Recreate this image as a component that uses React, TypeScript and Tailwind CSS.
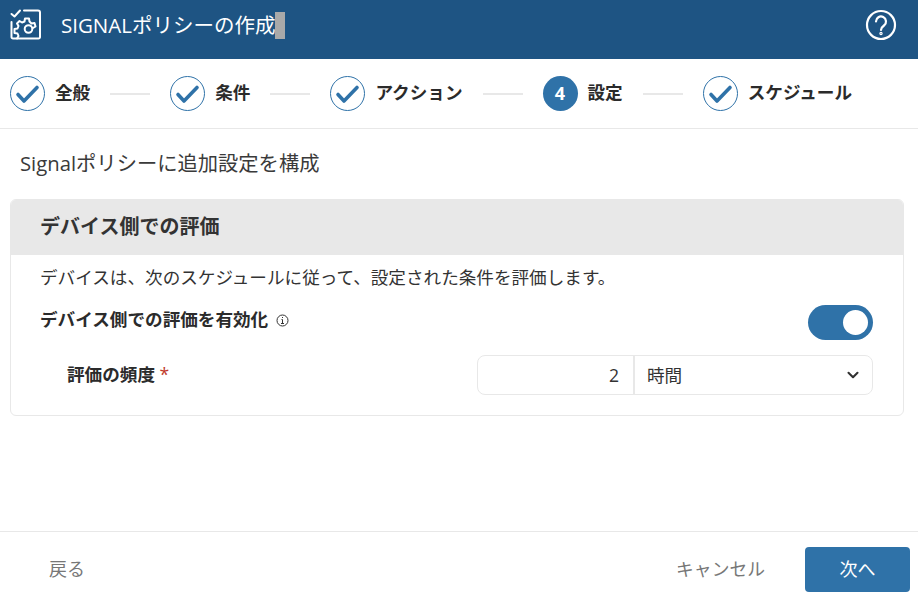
import { ChevronDown } from 'lucide-react';

const font = "font-['Open_Sans','Noto_Sans_CJK_JP',sans-serif]";

function Step({ label, number, last }: { label: string; number?: number; last?: boolean }) {
  return (
    <div className="flex items-center">
      {number ? (
        <div className="flex size-[35px] items-center justify-center rounded-full bg-[#2f72a8] text-[18px] font-bold text-white">
          {number}
        </div>
      ) : (
        <svg width="35" height="35" viewBox="0 0 35 35" fill="none" stroke="#2f72a8">
          <circle cx="17.500" cy="17.500" r="17" />
          <path d="M8 18.500l6 6.500L27 11.500" strokeWidth="3.600" strokeLinecap="round" strokeLinejoin="round" />
        </svg>
      )}
      <span className="ml-[10px] pb-[2px] text-[17.6px] leading-none font-bold text-[#2b2b2b]">{label}</span>
      {!last && <div className="mx-[20px] h-[2px] w-[40px] bg-[#e8e8e8]" />}
    </div>
  );
}

function PolicyIcon() {
  return (
    <svg width="32" height="32" viewBox="0 0 32 32" fill="none" stroke="white" strokeWidth="2" strokeLinecap="round" strokeLinejoin="round">
      <path d="M1.500 5l3 2.500L10 1.500" />
      <path d="M14 1.500h14a2 2 0 0 1 2 2V28a1.500 1.500 0 0 1-1.500 1.500H3A1.500 1.500 0 0 1 1.500 28V13" />
      <path d="M23 19l2.500-1.500-1-3.500-3 .5-2-2-.5-3h-4l-.5 3-2.500 1-2.500-1.500-2.500 2.500 1.500 2.500-1 2.500-3 .5v4l3 .5 1 2.500-1.500 2.500" />
      <circle cx="18.500" cy="20" r="3.800" />
    </svg>
  );
}

export default function App() {
  return (
    <div className={`flex h-[597px] w-[918px] flex-col bg-white ${font}`}>
      <header className="flex h-[59px] shrink-0 items-center bg-[#1e5483] pr-[21px] pb-[9px] pl-[10px] text-white">
        <PolicyIcon />
        <h1 className="ml-[19px] flex items-center text-[20.5px] font-normal">
          SIGNALポリシーの作成
          <span className="h-[27px] w-[10px] bg-[#a9a9a9]" />
        </h1>
        <svg className="ml-auto" width="32" height="32" viewBox="0 0 32 32" fill="none" stroke="white" strokeWidth="2.2" strokeLinecap="round">
          <circle cx="16" cy="16" r="14" />
          <path d="M11 12.500a5 5 0 1 1 8 4c-2 1.500-3 2.500-3 4.500" />
          <circle cx="16" cy="24.500" r="0.600" />
        </svg>
      </header>

      <nav className="flex h-[70px] shrink-0 items-center border-b border-[#e8e8e8] pl-[10px]">
        <Step label="全般" />
        <Step label="条件" />
        <Step label="アクション" />
        <Step label="設定" number={4} />
        <Step label="スケジュール" last />
      </nav>

      <main className="flex-1 px-[10px]">
        <p className="mt-[21px] pl-[10px] text-[20.3px] leading-[26px] text-[#3a3a3a]">Signalポリシーに追加設定を構成</p>

        <section className="mt-[23px] h-[217px] w-[894px] overflow-hidden rounded-[6px] border border-[#e8e8e8]">
          <div className="flex h-[55px] items-center bg-[#e8e8e8] pb-[2px] pl-[29px] text-[20px] font-bold text-[#333333]">
            デバイス側での評価
          </div>
          <p className="mt-[10px] pl-[29px] text-[17.6px] leading-[24px] text-[#333333]">
            デバイスは、次のスケジュールに従って、設定された条件を評価します。
          </p>
          <div className="mt-[16px] flex h-[35px] items-center justify-between pr-[30px] pl-[29px]">
            <div className="flex items-center pb-[6px] text-[17.6px] font-bold text-[#2b2b2b]">
              デバイス側での評価を有効化
              <svg className="mt-[3px] ml-[8px]" width="13" height="13" viewBox="0 0 13 13" fill="none" stroke="#333333">
                <circle cx="6.500" cy="6.500" r="5.500" />
                <path d="M6.500 5.500v4M5 9.500h3M5.500 5.500h1M6.500 3v1" />
              </svg>
            </div>
            <div className="flex h-[35px] w-[65px] items-center justify-end rounded-full bg-[#2f72a8] pr-[5px]">
              <div className="size-[25px] rounded-full bg-white" />
            </div>
          </div>
          <div className="mt-[15px] flex items-center justify-between pr-[30px] pl-[56px]">
            <div className="pb-[2px] text-[17.6px] font-bold text-[#2b2b2b]">
              評価の頻度 <span className="font-normal text-[#c0392b]">*</span>
            </div>
            <div className="flex h-[40px] w-[396px] rounded-[8px] border border-[#e8e8e8] text-[17.6px] text-[#333333]">
              <div className="flex w-[157px] items-center justify-end border-r-2 border-[#e8e8e8] pr-[14px]">2</div>
              <div className="flex flex-1 items-center justify-between pr-[10px] pl-[12px]">
                時間
                <ChevronDown size={18} strokeWidth={2.8} />
              </div>
            </div>
          </div>
        </section>
      </main>

      <footer className="flex h-[66px] shrink-0 items-start border-t border-[#e8e8e8] pt-[15px] pr-[8px] pl-[49px]">
        <span className="text-[18px] leading-[45px] text-[#777777]">戻る</span>
        <span className="mr-[40px] ml-auto text-[17.8px] leading-[45px] text-[#777777]">キャンセル</span>
        <button className="h-[45px] w-[105px] rounded-[4px] bg-[#2f72a8] text-[18px] text-white">次へ</button>
      </footer>
    </div>
  );
}
